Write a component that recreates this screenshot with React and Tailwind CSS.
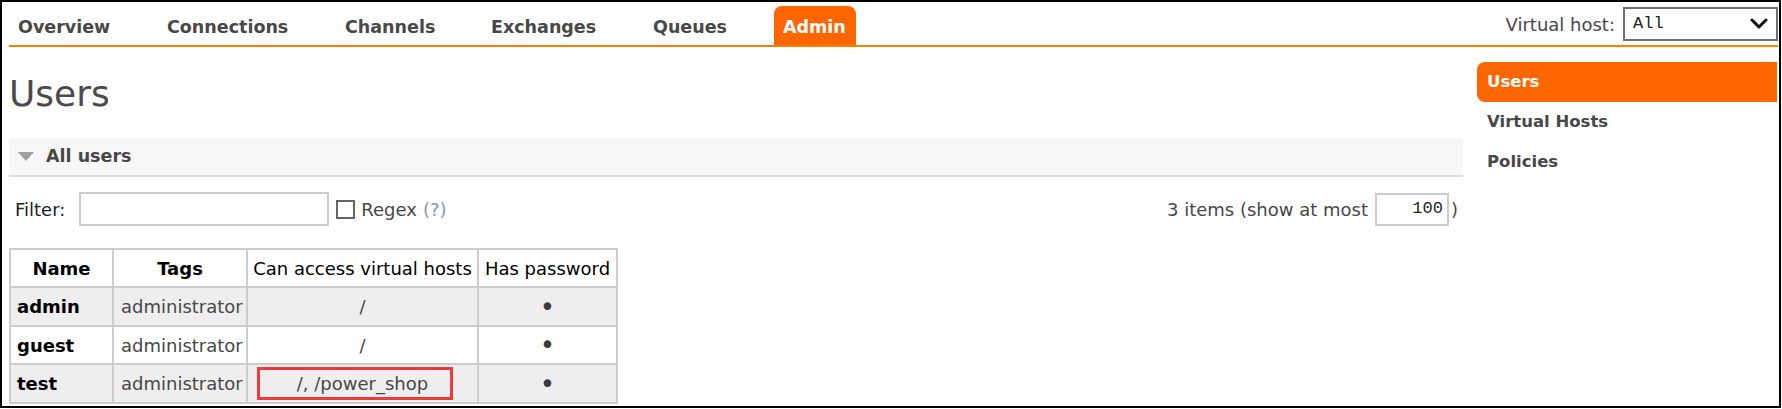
import React from "react";

function Chevron() {
  return (
    <svg width="18" height="12" viewBox="0 0 18 12" className="block">
      <polyline points="2,2 9,9 16,2" fill="none" stroke="#111" strokeWidth="3" strokeLinecap="round" strokeLinejoin="round" />
    </svg>
  );
}

function Triangle() {
  return (
    <svg width="16" height="10" viewBox="0 0 16 10" className="block">
      <polygon points="0,0 16,0 8,9" fill="#a0a0a0" />
    </svg>
  );
}

export default function App() {
  return (
    <div className="w-[1782px] h-[409px] bg-white font-['DejaVu_Sans',sans-serif] text-[#484848]">
      <div className="w-[1781px] h-[408px] border-2 border-black box-border flex flex-col">
        {/* Top navigation */}
        <div className="ml-[7px] mr-[1px] h-[45px] border-b-2 border-[#ff8000] flex items-end justify-between box-border">
          <ul className="flex items-end h-[43px]">
            <li className="w-[149px] h-[39px] pl-[9px] pt-[4px] leading-[35px] text-[17.5px] font-bold">Overview</li>
            <li className="w-[178px] h-[39px] pl-[9px] pt-[4px] leading-[35px] text-[17.5px] font-bold">Connections</li>
            <li className="w-[146px] h-[39px] pl-[9px] pt-[4px] leading-[35px] text-[17.5px] font-bold">Channels</li>
            <li className="w-[162px] h-[39px] pl-[9px] pt-[4px] leading-[35px] text-[17.5px] font-bold">Exchanges</li>
            <li className="w-[130px] h-[39px] pl-[9px] pt-[4px] leading-[35px] text-[17.5px] font-bold">Queues</li>
            <li className="w-[82px] h-[39px] pl-[9px] pt-[4px] leading-[35px] text-[17.5px] font-bold bg-[#ff6600] text-white rounded-t-[8px]">Admin</li>
          </ul>
          <div className="flex items-center gap-[8px] h-[43px] pb-[2px] pt-[3px] box-border">
            <span className="text-[18px]">Virtual host:</span>
            <div className="w-[155px] h-[34px] border-2 border-[#707070] box-border flex items-center justify-between pl-[8px] pr-[8px]">
              <span className="font-['Liberation_Mono',monospace] text-[17px] text-[#222]">All</span>
              <Chevron />
            </div>
          </div>
        </div>

        {/* Body */}
        <div className="flex ml-[7px] mr-[1px]">
          {/* Main column */}
          <div className="w-[1454px]">
            <h1 className="mt-[29px] text-[36px] leading-[36px] font-normal text-[#4a4a4a]">Users</h1>

            <div className="mt-[26px] h-[39px] bg-[#f7f7f7] border-b-2 border-[#dddddd] box-border flex items-center pl-[9px]">
              <Triangle />
              <span className="ml-[12px] text-[17.5px] font-bold text-[#484848]">All users</span>
            </div>

            <div className="mt-[15px] flex items-center justify-between h-[34px] pl-[6px] pr-[5px]">
              <div className="flex items-center">
                <span className="text-[18px] text-[#222]">Filter:</span>
                <div className="ml-[14px] w-[250px] h-[34px] border-2 border-[#cccccc] box-border bg-white" />
                <div className="ml-[7px] w-[19px] h-[19px] border-2 border-[#666666] box-border bg-white" />
                <span className="ml-[6px] text-[18px]">Regex</span>
                <span className="ml-[6px] text-[18px] text-[#8a97a8]">(?)</span>
              </div>
              <div className="flex items-center">
                <span className="text-[18px]">3 items (show at most</span>
                <div className="ml-[7px] w-[74px] h-[33px] border-2 border-[#cccccc] box-border flex items-center justify-end pr-[4px]">
                  <span className="font-['Liberation_Mono',monospace] text-[17px] text-[#222]">100</span>
                </div>
                <span className="ml-[2px] text-[18px]">)</span>
              </div>
            </div>

            <table className="mt-[22px] border-collapse table-fixed w-[607px] text-[18px]">
              <colgroup>
                <col className="w-[103px]" />
                <col className="w-[134px]" />
                <col className="w-[231px]" />
                <col className="w-[139px]" />
              </colgroup>
              <thead>
                <tr className="h-[38px] bg-white">
                  <th className="border-2 border-[#cccccc] font-bold text-black text-center">Name</th>
                  <th className="border-2 border-[#cccccc] font-bold text-black text-center">Tags</th>
                  <th className="border-2 border-[#cccccc] font-normal text-black text-center whitespace-nowrap">Can access virtual hosts</th>
                  <th className="border-2 border-[#cccccc] font-normal text-black text-center whitespace-nowrap">Has password</th>
                </tr>
              </thead>
              <tbody>
                <tr className="h-[39px] bg-[#eeeeee]">
                  <td className="border-2 border-[#cccccc] pl-[6px] font-bold text-black">admin</td>
                  <td className="border-2 border-[#cccccc] pl-[7px] whitespace-nowrap">administrator</td>
                  <td className="border-2 border-[#cccccc] text-center">/</td>
                  <td className="border-2 border-[#cccccc] text-center text-[26px] leading-none text-[#3a3a3a]">•</td>
                </tr>
                <tr className="h-[38px] bg-white">
                  <td className="border-2 border-[#cccccc] pl-[6px] font-bold text-black">guest</td>
                  <td className="border-2 border-[#cccccc] pl-[7px] whitespace-nowrap">administrator</td>
                  <td className="border-2 border-[#cccccc] text-center">/</td>
                  <td className="border-2 border-[#cccccc] text-center text-[26px] leading-none text-[#3a3a3a]">•</td>
                </tr>
                <tr className="h-[39px] bg-[#eeeeee]">
                  <td className="border-2 border-[#cccccc] pl-[6px] font-bold text-black">test</td>
                  <td className="border-2 border-[#cccccc] pl-[7px] whitespace-nowrap">administrator</td>
                  <td className="border-2 border-[#cccccc] text-center relative">
                    /, /power_shop
                    <span className="absolute left-[9px] top-[2px] w-[196px] h-[33px] border-[3px] border-[#ef3a3a] box-border pointer-events-none" />
                  </td>
                  <td className="border-2 border-[#cccccc] text-center text-[26px] leading-none text-[#3a3a3a]">•</td>
                </tr>
              </tbody>
            </table>
          </div>

          {/* Sidebar */}
          <div className="ml-[14px] w-[300px] mt-[15px] flex flex-col">
            <div className="h-[40px] bg-[#ff6600] rounded-l-[8px] pl-[10px] flex items-center text-white font-bold text-[16.5px]">Users</div>
            <div className="h-[40px] pl-[10px] flex items-center font-bold text-[16.5px]">Virtual Hosts</div>
            <div className="h-[40px] pl-[10px] flex items-center font-bold text-[16.5px]">Policies</div>
          </div>
        </div>
      </div>
    </div>
  );
}
